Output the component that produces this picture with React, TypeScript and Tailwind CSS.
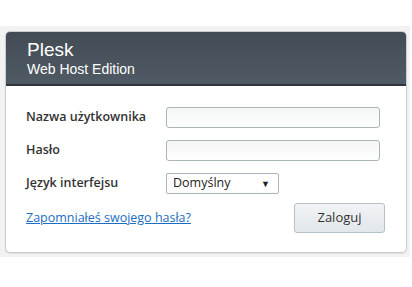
export default function App() {
  return (
    <div className="h-[287px] w-[412px] bg-white pt-[26px] font-['Open_Sans',sans-serif]">
      <div className="h-[231px] w-[410px] bg-[#f2f2f2] pl-[5px] pt-[5px]">
        <div className="flex h-[222px] w-[402px] flex-col overflow-hidden rounded-[5px] border border-[#c9cdd0] bg-white shadow-[0_1px_1px_rgba(0,0,0,0.08)]">
          <div className="h-[54px] border-b-2 border-[#2f363d] bg-gradient-to-b from-[#434c55] to-[#4f5a64] px-[21px] pt-[7px] font-['Liberation_Sans',Arial,sans-serif] text-white">
            <div className="text-[19px] leading-[22px]">Plesk</div>
            <div className="text-[14px] leading-[16px]">Web Host Edition</div>
          </div>
          <div className="flex flex-col gap-[12px] pl-[20px] pr-[21px] pt-[21px] text-[12.5px] text-[#333]">
            <Row label="Nazwa użytkownika">
              <input className="h-[21px] w-[214px] rounded-[3px] border border-[#aab5ba] bg-gradient-to-b from-[#f4f5f5] to-white outline-none" />
            </Row>
            <Row label="Hasło">
              <input
                type="password"
                className="h-[21px] w-[214px] rounded-[3px] border border-[#aab5ba] bg-gradient-to-b from-[#f4f5f5] to-white outline-none"
              />
            </Row>
            <Row label="Język interfejsu">
              <div className="flex h-[21px] w-[113px] items-center justify-between rounded-[2px] border border-[#aab5ba] bg-white pl-[6px] pr-[8px] text-[12.5px] text-[#222]">
                <span>Domyślny</span>
                <span className="text-[9px]">▼</span>
              </div>
            </Row>
            <div className="-mt-[3px] flex items-center justify-between">
              <a href="#" className="text-[12.5px] text-[#1b6ec2] underline">
                Zapomniałeś swojego hasła?
              </a>
              <button className="h-[30px] w-[91px] rounded-[3px] border border-[#b6c2ca] bg-gradient-to-b from-[#f1f3f5] to-[#e2e7eb] text-[13px] text-[#333]">
                Zaloguj
              </button>
            </div>
          </div>
        </div>
      </div>
    </div>
  );
}

function Row({ label, children }: { label: string; children: React.ReactNode }) {
  return (
    <div className="flex h-[21px] items-center">
      <label className="w-[140px] font-semibold">{label}</label>
      {children}
    </div>
  );
}
